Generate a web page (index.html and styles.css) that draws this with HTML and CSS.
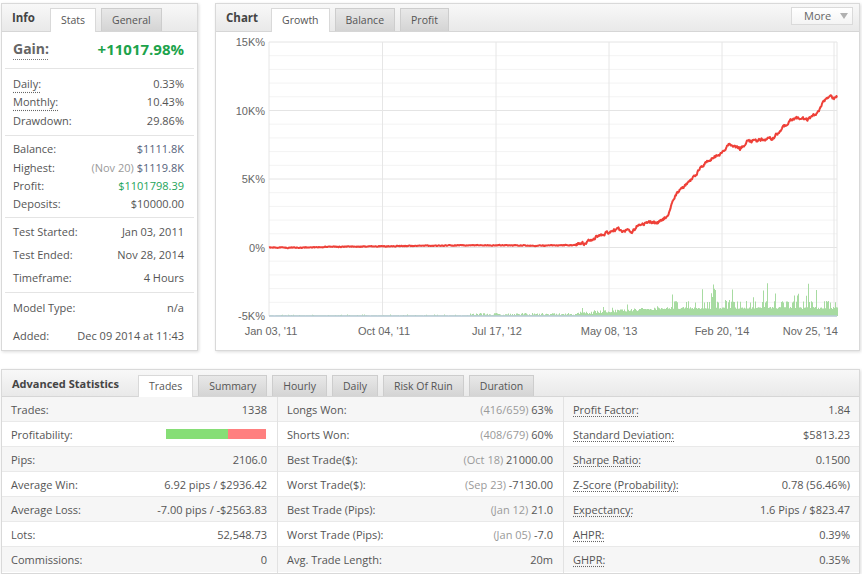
FILE: index.html
```html
<!DOCTYPE html>
<html>
<head>
<meta charset="utf-8">
<title>Stats</title>
<link rel="stylesheet" href="styles.css">
</head>
<body>
<div class="page">
  <div class="top">
    <section class="panel info">
      <div class="phead">
        <div class="ptitle t-info">Info</div>
        <div class="tabs">
          <div class="tab active">Stats</div>
          <div class="tab">General</div>
        </div>
      </div>
      <div class="gain"><span class="glabel">Gain:</span><span class="gval">+11017.98%</span></div>
      <div class="grp g1">
        <div class="irow"><span class="dot">Daily:</span><span>0.33%</span></div>
        <div class="irow"><span class="dot">Monthly:</span><span>10.43%</span></div>
        <div class="irow"><span>Drawdown:</span><span>29.86%</span></div>
      </div>
      <div class="grp g2">
        <div class="irow"><span>Balance:</span><span class="blue">$1111.8K</span></div>
        <div class="irow"><span>Highest:</span><span><span class="muted">(Nov 20)</span> <span class="blue">$1119.8K</span></span></div>
        <div class="irow"><span>Profit:</span><span class="green">$1101798.39</span></div>
        <div class="irow"><span>Deposits:</span><span>$10000.00</span></div>
      </div>
      <div class="grp g3">
        <div class="irow"><span>Test Started:</span><span>Jan 03, 2011</span></div>
        <div class="irow"><span>Test Ended:</span><span>Nov 28, 2014</span></div>
        <div class="irow"><span>Timeframe:</span><span>4 Hours</span></div>
      </div>
      <div class="grp g4">
        <div class="irow"><span>Model Type:</span><span>n/a</span></div>
        <div class="irow"><span>Added:</span><span>Dec 09 2014 at 11:43</span></div>
      </div>
    </section>

    <section class="panel chart">
      <div class="phead">
        <div class="ptitle t-chart">Chart</div>
        <div class="tabs">
          <div class="tab active">Growth</div>
          <div class="tab">Balance</div>
          <div class="tab">Profit</div>
        </div>
        <div class="more">More <span class="caret"></span></div>
      </div>
      <div class="cbody">
        <svg id="plot" class="plot" width="642" height="318" viewBox="216 32 642 318" xmlns="http://www.w3.org/2000/svg">
          <g id="grid"></g>
          <g id="bars"></g>
          <line x1="269" y1="316" x2="837" y2="316" class="base"/>
          <g id="line"></g>
          <g class="ylab">
            <text x="265" y="46">15K%</text>
            <text x="265" y="114.5">10K%</text>
            <text x="265" y="183">5K%</text>
            <text x="265" y="251.5">0%</text>
            <text x="265" y="320">-5K%</text>
          </g>
          <g class="xlab">
            <text x="271" y="335">Jan 03, '11</text>
            <text x="384" y="335">Oct 04, '11</text>
            <text x="497" y="335">Jul 17, '12</text>
            <text x="609" y="335">May 08, '13</text>
            <text x="722" y="335">Feb 20, '14</text>
            <text x="838" y="335" class="end">Nov 25, '14</text>
          </g>
        </svg>
      </div>
    </section>
  </div>

  <section class="panel adv">
    <div class="phead">
      <div class="ptitle t-adv">Advanced Statistics</div>
      <div class="tabs">
        <div class="tab active">Trades</div>
        <div class="tab">Summary</div>
        <div class="tab">Hourly</div>
        <div class="tab">Daily</div>
        <div class="tab">Risk Of Ruin</div>
        <div class="tab">Duration</div>
      </div>
    </div>
    <div class="sgrid">
      <div class="col c1">
        <div class="srow"><span>Trades:</span><span>1338</span></div>
        <div class="srow"><span>Profitability:</span><span class="pbar"><span class="pwin" style="width:62%"></span></span></div>
        <div class="srow"><span>Pips:</span><span>2106.0</span></div>
        <div class="srow"><span>Average Win:</span><span>6.92 pips / $2936.42</span></div>
        <div class="srow"><span>Average Loss:</span><span>-7.00 pips / -$2563.83</span></div>
        <div class="srow"><span>Lots:</span><span>52,548.73</span></div>
        <div class="srow"><span>Commissions:</span><span>0</span></div>
      </div>
      <div class="col c2">
        <div class="srow"><span>Longs Won:</span><span><span class="muted">(416/659)</span> 63%</span></div>
        <div class="srow"><span>Shorts Won:</span><span><span class="muted">(408/679)</span> 60%</span></div>
        <div class="srow"><span>Best Trade($):</span><span><span class="muted">(Oct 18)</span> 21000.00</span></div>
        <div class="srow"><span>Worst Trade($):</span><span><span class="muted">(Sep 23)</span> -7130.00</span></div>
        <div class="srow"><span>Best Trade (Pips):</span><span><span class="muted">(Jan 12)</span> 21.0</span></div>
        <div class="srow"><span>Worst Trade (Pips):</span><span><span class="muted">(Jan 05)</span> -7.0</span></div>
        <div class="srow"><span>Avg. Trade Length:</span><span>20m</span></div>
      </div>
      <div class="col c3">
        <div class="srow"><span class="sdot">Profit Factor:</span><span>1.84</span></div>
        <div class="srow"><span class="sdot">Standard Deviation:</span><span>$5813.23</span></div>
        <div class="srow"><span class="sdot">Sharpe Ratio:</span><span>0.1500</span></div>
        <div class="srow"><span class="sdot">Z-Score (Probability):</span><span>0.78 (56.46%)</span></div>
        <div class="srow"><span class="sdot">Expectancy:</span><span>1.6 Pips / $823.47</span></div>
        <div class="srow"><span class="sdot">AHPR:</span><span>0.39%</span></div>
        <div class="srow"><span class="sdot">GHPR:</span><span>0.35%</span></div>
      </div>
    </div>
  </section>
</div>
<script src="script.js"></script>
</body>
</html>
```

FILE: styles.css
```css
* { box-sizing: border-box; }
body {
  margin: 0;
  background: #fff;
  font-family: "Open Sans", "Noto Sans", sans-serif;
  font-size: 11px;
  color: #555;
}
.page { padding: 3px 0 0 1px; width: 862px; }
.top { display: flex; gap: 17px; height: 348px; }

.panel {
  background: #fff;
  border: 1px solid #d9d9d9;
  box-shadow: 1px 1px 3px rgba(0, 0, 0, .14);
  display: flex;
  flex-direction: column;
}
.info { width: 197px; }
.chart { width: 645px; }
.adv { width: 859px; margin-top: 18px; height: 205px; }

.phead {
  height: 28px;
  flex: none;
  display: flex;
  align-items: flex-end;
  padding-left: 10px;
  background: linear-gradient(#f8f8f8, #e9e9e9);
  border-bottom: 1px solid #d6d6d6;
}
.ptitle { align-self: center; font-weight: bold; font-size: 11.5px; color: #444; }
.t-adv { font-size: 11px; }
.t-info { width: 38px; }
.t-chart { width: 45px; }
.t-adv { width: 126px; }

.tabs { display: flex; gap: 5px; }
.tab {
  height: 23px;
  line-height: 22px;
  padding: 0 10px;
  font-size: 10.5px;
  color: #555;
  border: 1px solid #cdcdcd;
  border-bottom: none;
  background: linear-gradient(#e8e8e8, #d4d4d4);
}
.tab.active {
  background: #fff;
  height: 24px;
  margin-bottom: -1px;
  position: relative;
  border-color: #d9d9d9;
}
.adv .phead { height: 27px; }
.adv .tab { height: 21px; line-height: 20px; }
.adv .tab.active { height: 22px; }

.more {
  margin-left: auto;
  margin-right: 6px;
  align-self: flex-start;
  margin-top: 3px;
  width: 62px;
  height: 18px;
  border: 1px solid #dadada;
  background: linear-gradient(#ffffff, #f4f4f4);
  font-size: 11px;
  line-height: 16px;
  color: #666;
  display: flex;
  align-items: center;
  padding-left: 12px;
  gap: 9px;
}
.caret {
  width: 0;
  height: 0;
  border-left: 4px solid transparent;
  border-right: 4px solid transparent;
  border-top: 6px solid #b0b0b0;
}

/* info panel */
.gain {
  height: 37px;
  flex: none;
  margin: 0 3px;
  padding: 0 10px 3px 8px;
  display: flex;
  justify-content: space-between;
  align-items: center;
  border-bottom: 1px solid #e4e4e4;
}
.glabel {
  font-size: 14px;
  font-weight: bold;
  color: #666;
  text-decoration: underline dotted #777;
  text-decoration-thickness: 1px;
  text-underline-offset: 5px;
}
.gval { font-size: 15px; font-weight: bold; color: #1ca34b; }
.grp {
  margin: 0 3px;
  padding: 0 10px 0 8px;
  border-bottom: 1px solid #e4e4e4;
  flex: none;
}
.grp:last-child { border-bottom: none; }
.irow { display: flex; justify-content: space-between; align-items: center; }
.g1 { padding-top: 5px; padding-bottom: 5px; }
.g1 .irow { height: 18.5px; }
.g2 { padding-top: 4px; padding-bottom: 4px; }
.g2 .irow { height: 18.4px; }
.g3 { padding-top: 2px; padding-bottom: 3px; }
.g3 .irow { height: 23px; }
.g4 .irow { height: 28px; }
.dot {
  text-decoration: underline dotted #666;
  text-underline-offset: 4px;
}
.muted { color: #9a9a9a; }
.blue { color: #55627a; }
.green { color: #1da45a; }

/* chart */
.cbody { flex: 1; }
.plot { display: block; }
.base { stroke: #b9cbd9; stroke-width: 1.5; }
.ylab text, .xlab text {
  font-family: "Liberation Sans", Arial, sans-serif;
  font-size: 11px;
  fill: #666;
}
.ylab text { text-anchor: end; }
.xlab text { text-anchor: middle; }
.xlab text.end { text-anchor: end; }

/* advanced statistics */
.sgrid { display: flex; flex: 1; }
.col { display: flex; flex-direction: column; border-right: 1px solid #e2e2e2; }
.c1 { width: 276px; }
.c2 { width: 286px; }
.c3 { flex: 1; border-right: none; }
.srow {
  height: 25px;
  flex: none;
  display: flex;
  justify-content: space-between;
  align-items: center;
  padding: 0 10px 0 9px;
  border-bottom: 1px solid #e9e9e9;
}
.c3 .srow { padding-right: 9px; }
.srow:nth-child(odd) { background: #f6f6f6; }
.srow:last-child { border-bottom: none; }
.sdot {
  text-decoration: underline dotted #666;
  text-underline-offset: 2px;
}
.pbar {
  width: 100px;
  height: 10px;
  background: #ff7f7f;
  display: flex;
  margin-right: 1px;
}
.pwin { background: #86de76; height: 100%; }
```

FILE: script.js
```js
(function () {
  var NS = 'http://www.w3.org/2000/svg';
  var seed = 12345;
  function rnd() { seed = (seed * 16807) % 2147483647; return (seed - 1) / 2147483646; }
  function el(name, attrs, parent) {
    var e = document.createElementNS(NS, name);
    for (var k in attrs) e.setAttribute(k, attrs[k]);
    parent.appendChild(e);
    return e;
  }
  var grid = document.getElementById('grid');
  var X0 = 269, X1 = 837, Y0 = 42, Y1 = 316;
  var step = (Y1 - Y0) / 20;
  for (var i = 0; i <= 20; i++) {
    var y = Y0 + step * i;
    var major = i % 5 === 0;
    el('line', { x1: X0, x2: X1, y1: y, y2: y, stroke: major ? '#e4e4e4' : '#f3f3f3', 'stroke-width': 1 }, grid);
  }
  [269, 382.5, 496, 609, 722, 834, 837].forEach(function (x) {
    el('line', { x1: x, x2: x, y1: Y0, y2: Y1, stroke: '#e6e6e6', 'stroke-width': 1 }, grid);
  });

  // volume bars
  var bars = document.getElementById('bars');
  var d = '';
  for (var x = 270; x <= 837; x += 1) {
    var h, r = rnd();
    if (x < 470) h = r < 0.3 ? r * 5 : 0.6;
    else if (x < 575) h = 0.6 + rnd() * 2.5;
    else if (x < 672) h = 1 + (x - 575) / 97 * 6 + rnd() * 3 + (rnd() < 0.1 ? rnd() * 6 : 0);
    else {
      h = 7 + rnd() * 2;
      var s = rnd();
      if (s < 0.28) h = 13 + rnd() * 2;
      else if (s < 0.36) h = 15 + rnd() * 8;
      else if (s < 0.42) h = 22 + rnd() * 12;
    }
    d += 'M' + x + ' ' + Y1 + 'v-' + h.toFixed(1) + 'h1v' + h.toFixed(1) + 'z';
  }
  el('path', { d: d, fill: '#a7dba1' }, bars);

  // growth line
  var A = [[269,247.5],[300,247.8],[330,246.8],[384,246.3],[420,245.8],[460,245.4],[500,245.2],[540,245.6],[572,245.2],[585,243],[597,237],[609,232],[618,229],[624,231],[632,232],[637,226],[647,223],[660,222],[666,217],[670,210],[673,200],[677,193],[687,184],[693,178],[703,165],[713,157],[720,154],[730,144],[740,149],[747,142],[760,140],[773,138],[780,131],[790,120],[800,118],[807,120],[817,113],[823,102],[830,96],[834,98],[837,97]];
  function interp(x) {
    for (var j = 0; j < A.length - 1; j++) {
      if (x >= A[j][0] && x <= A[j + 1][0]) {
        var t = (x - A[j][0]) / (A[j + 1][0] - A[j][0]);
        return A[j][1] + (A[j + 1][1] - A[j][1]) * t;
      }
    }
    return A[A.length - 1][1];
  }
  var pts = [], n = 0;
  for (var px = 269; px <= 837; px += 0.5) {
    var amp = px < 575 ? 0.35 : 1.3;
    n = n * 0.55 + (rnd() - 0.5) * amp * 2;
    pts.push(px + ',' + (interp(px) + n).toFixed(2));
  }
  el('polyline', { points: pts.join(' '), fill: 'none', stroke: '#ee4038', 'stroke-width': 2, 'stroke-linejoin': 'round' }, document.getElementById('line'));
})();
```
